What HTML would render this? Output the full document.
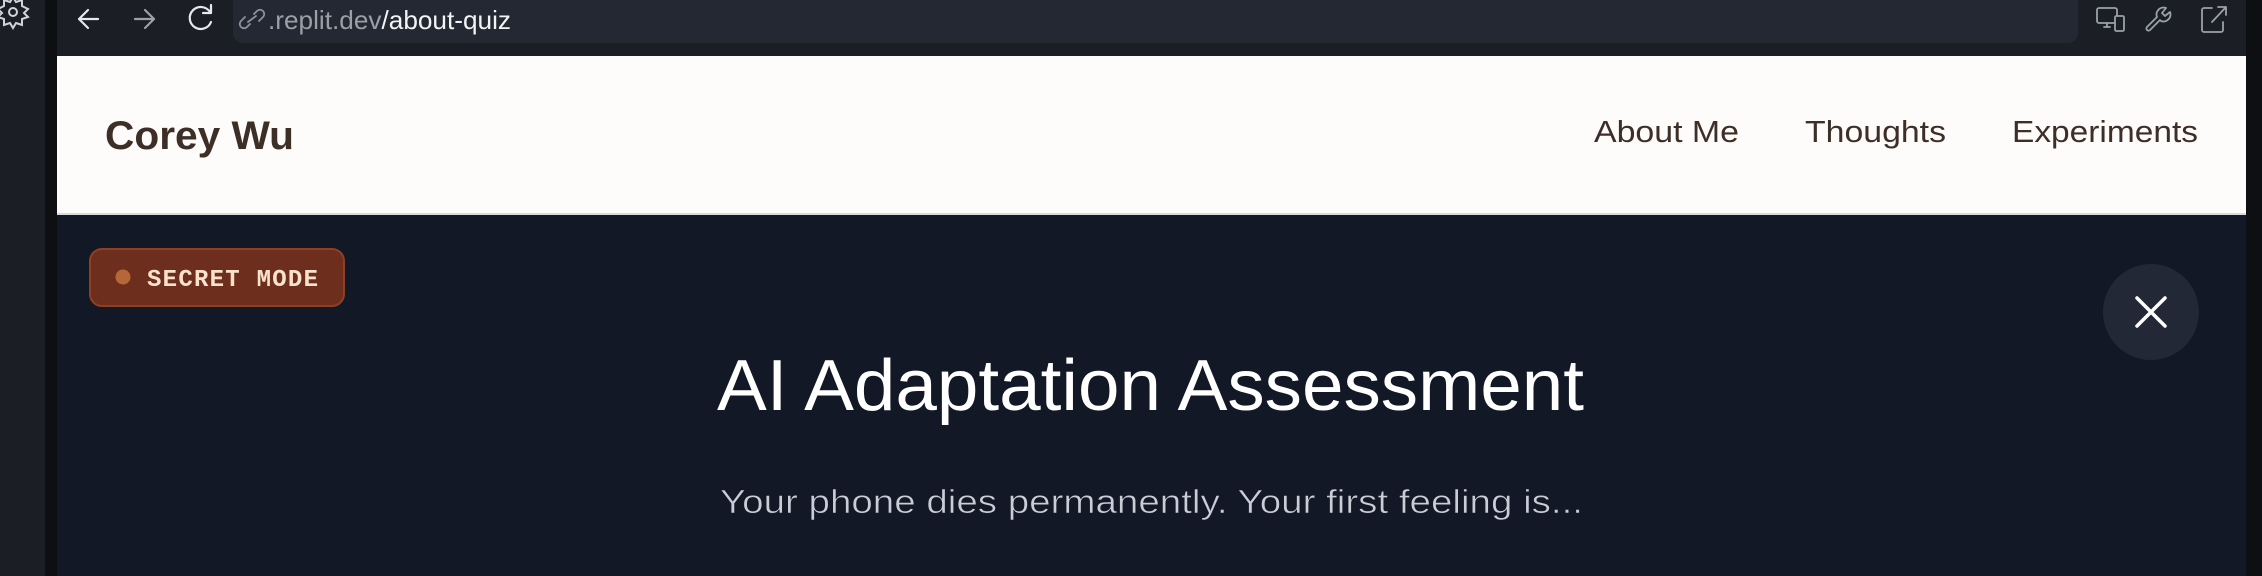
<!DOCTYPE html>
<html><head><meta charset="utf-8"><style>
html,body{margin:0;padding:0;width:2262px;height:576px;overflow:hidden;background:#1b1e25;}
svg{display:block}
</style></head><body>
<svg width="2262" height="576" viewBox="0 0 2262 576" xmlns="http://www.w3.org/2000/svg">
<rect width="2262" height="576" fill="#1b1e25"/>
<rect x="45" y="0" width="12" height="576" fill="#0e0f13"/>
<rect x="2246" y="0" width="16" height="576" fill="#0e0f13"/>
<!-- gear -->
<g fill="none" stroke="#d0d3d8" stroke-width="2">
<circle cx="13" cy="12" r="4"/>
<path d="M13 -3 L16 2 L22 0 L22 6 L28 9 L24 13 L28 17 L22 19 L22 25 L16 23 L13 28 L10 23 L4 25 L4 19 L-2 17 L2 13 L-2 9 L4 6 L4 0 L10 2 Z"/>
</g>
<!-- nav icons -->
<g fill="none" stroke="#e6e8ec" stroke-width="2.2" stroke-linecap="round" stroke-linejoin="round">
<path d="M98 19 H79 M88 10 L79 19 L88 28"/>
</g>
<g fill="none" stroke="#9ca1a9" stroke-width="2.2" stroke-linecap="round" stroke-linejoin="round">
<path d="M135 19 H154 M145 10 L154 19 L145 28"/>
</g>
<g fill="none" stroke="#e6e8ec" stroke-width="2.2" stroke-linecap="round" stroke-linejoin="round">
<path d="M210 12 A11 11 0 1 0 211 22"/><path d="M211 5 V13 H203"/>
</g>
<rect x="233" y="-12" width="1845" height="55" rx="10" fill="#242832"/>
<g fill="none" stroke="#8d929a" stroke-width="1.8" stroke-linecap="round">
<path d="M250 24 L247 27 A4 4 0 0 1 241 21 L245 17"/><path d="M254 14 L257 11 A4 4 0 0 1 263 17 L259 21"/><path d="M248 22 L256 16"/>
</g>
<text x="268" y="29" font-family="Liberation Sans, sans-serif" font-size="26" fill="#9aa0a8" textLength="243" lengthAdjust="spacingAndGlyphs">.replit.dev<tspan fill="#f2f3f5">/about-quiz</tspan></text>
<!-- right icons -->
<g fill="none" stroke="#9ca1a9" stroke-width="1.8" stroke-linecap="round" stroke-linejoin="round">
<rect x="2097" y="8" width="20" height="15" rx="2"/><path d="M2104 27 H2110 M2107 23 V27"/><rect x="2115" y="16" width="9" height="15" rx="1.5" fill="#1b1e25"/>
<path d="M2150 30 L2160 20 M2150 30 A2 2 0 0 1 2147 27 L2157 17 A7 7 0 0 1 2166 8 L2162 13 L2165 16 L2170 12 A7 7 0 0 1 2161 21"/>
<path d="M2212 8 H2204 A2 2 0 0 0 2202 10 V30 A2 2 0 0 0 2204 32 H2221 A2 2 0 0 0 2223 30 V22 M2212 22 L2226 7 M2218 7 H2226 V15"/>
</g>
<!-- header -->
<rect x="57" y="56" width="2189" height="158" fill="#fdfcfa"/>
<rect x="57" y="213" width="2189" height="2" fill="#dcdad7"/>
<text x="105" y="149" font-family="Liberation Sans, sans-serif" font-weight="bold" font-size="40" fill="#3d2f27" textLength="189" lengthAdjust="spacingAndGlyphs">Corey Wu</text>
<g font-family="Liberation Sans, sans-serif" font-size="31" fill="#3d2f27">
<text x="1594" y="142" textLength="145" lengthAdjust="spacingAndGlyphs">About Me</text>
<text x="1805" y="142" textLength="141" lengthAdjust="spacingAndGlyphs">Thoughts</text>
<text x="2012" y="142" textLength="186" lengthAdjust="spacingAndGlyphs">Experiments</text>
</g>
<!-- content -->
<rect x="57" y="215" width="2189" height="361" fill="#131826"/>
<rect x="90" y="249" width="254" height="57" rx="12" fill="#6d2e1d" stroke="#8f3f22" stroke-width="2"/>
<circle cx="123" cy="277" r="7.5" fill="#b5673a"/>
<text x="147" y="286" font-family="Liberation Mono, monospace" font-weight="bold" font-size="24" fill="#f8e2cc" textLength="171" lengthAdjust="spacing">SECRET MODE</text>
<circle cx="2151" cy="312" r="48" fill="#222836"/>
<path d="M2137 298 L2165 326 M2165 298 L2137 326" stroke="#ffffff" stroke-width="3.5" stroke-linecap="round"/>
<text x="717" y="410" font-family="Liberation Sans, sans-serif" font-size="72" fill="#ffffff" stroke="#131826" stroke-width="1.5" paint-order="stroke" textLength="867" lengthAdjust="spacingAndGlyphs">AI Adaptation Assessment</text>
<text x="720" y="513" font-family="Liberation Sans, sans-serif" font-size="33" fill="#c9cdd6" stroke="#131826" stroke-width="0.6" textLength="863" lengthAdjust="spacingAndGlyphs">Your phone dies permanently. Your first feeling is...</text>
</svg>
</body></html>
